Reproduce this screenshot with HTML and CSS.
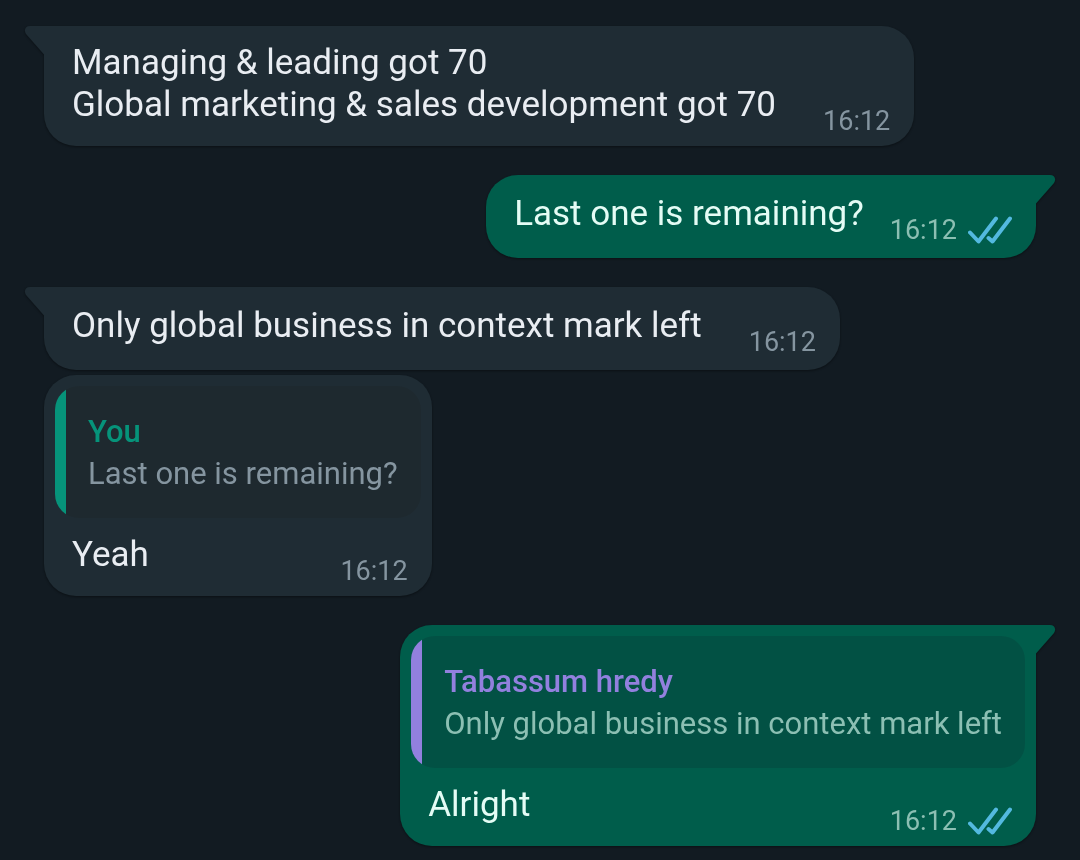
FILE: index.html
```html
<!DOCTYPE html>
<html lang="en">
<head>
<meta charset="utf-8">
<meta name="viewport" content="width=device-width, initial-scale=1">
<title>Chat</title>
<link rel="stylesheet" href="styles.css">
</head>
<body>
<svg class="symbols" aria-hidden="true">
  <symbol id="tail" viewBox="0 0 21 29"><path d="M21 0H6C1.500 0-.5 4 2 8L20 28.500h1z"/></symbol>
  <symbol id="ticks" viewBox="0 0 44 28"><path d="M2 16.500L10.500 25.500L28 2.500M20.500 22L24.500 25.500L42 2.500"/></symbol>
</svg>
<main class="chat">
  <article class="bubble incoming">
    <svg class="tail" aria-hidden="true"><use href="#tail"/></svg>
    <div class="message">
      <p class="text">Managing &amp; leading got 70<br>Global marketing &amp; sales development got 70</p>
      <time class="time">16:12</time>
    </div>
  </article>

  <article class="bubble outgoing">
    <svg class="tail" aria-hidden="true"><use href="#tail"/></svg>
    <div class="message single">
      <p class="text">Last one is remaining?</p>
      <div class="status">
        <time class="time">16:12</time>
        <svg class="ticks" role="img" aria-label="Read"><use href="#ticks"/></svg>
      </div>
    </div>
  </article>

  <article class="bubble incoming">
    <svg class="tail" aria-hidden="true"><use href="#tail"/></svg>
    <div class="message single">
      <p class="text">Only global business in context mark left</p>
      <time class="time">16:12</time>
    </div>
  </article>

  <article class="bubble incoming grouped">
    <blockquote class="quote">
      <p class="quote-name">You</p>
      <p class="quote-text">Last one is remaining?</p>
    </blockquote>
    <div class="message">
      <p class="text">Yeah</p>
      <time class="time">16:12</time>
    </div>
  </article>

  <article class="bubble outgoing">
    <svg class="tail" aria-hidden="true"><use href="#tail"/></svg>
    <blockquote class="quote contact">
      <p class="quote-name">Tabassum hredy</p>
      <p class="quote-text">Only global business in context mark left</p>
    </blockquote>
    <div class="message">
      <p class="text">Alright</p>
      <div class="status">
        <time class="time">16:12</time>
        <svg class="ticks" role="img" aria-label="Read"><use href="#ticks"/></svg>
      </div>
    </div>
  </article>
</main>
</body>
</html>
```
FILE: styles.css
```css
* {
  box-sizing: border-box;
}

body {
  margin: 0;
  background: #121b22;
  font-family: Roboto, "Noto Sans", sans-serif;
}

p,
blockquote {
  margin: 0;
}

.symbols {
  position: absolute;
  width: 0;
  height: 0;
}

.chat {
  display: flex;
  flex-direction: column;
  align-items: flex-start;
  gap: 29px;
  padding: 26px 44px 14px;
}

.bubble {
  position: relative;
  max-width: 100%;
  border-radius: 32px;
  background: var(--bubble);
  color: var(--ink);
  filter: drop-shadow(0 1px 1px rgba(0, 0, 0, 0.4));
}

.incoming {
  --bubble: #1f2c34;
  --ink: #e9edf2;
  --muted: #8595a0;
  --gap: 47px;
  --quote: #1e292f;
}

.outgoing {
  --bubble: #005d4b;
  --ink: #e4fcf5;
  --muted: #8cbfb3;
  --gap: 26px;
  --quote: #025144;
  align-self: flex-end;
}

.incoming:not(.grouped) {
  border-top-left-radius: 0;
}

.outgoing {
  border-top-right-radius: 0;
}

.grouped {
  margin-top: -24px;
}

.tail {
  position: absolute;
  top: 0;
  left: -20px;
  width: 21px;
  height: 29px;
  fill: var(--bubble);
}

.outgoing .tail {
  left: auto;
  right: -20px;
  transform: scaleX(-1);
}

.message {
  display: flex;
  align-items: flex-end;
  justify-content: space-between;
  gap: var(--gap);
  padding: 16px 24px 10px 28px;
}

.single {
  padding-top: 18px;
  padding-bottom: 13px;
}

.text {
  padding-bottom: 10px;
  font-size: 35px;
  line-height: 42px;
}

.status {
  display: flex;
  align-items: center;
  gap: 11px;
}

.time {
  color: var(--muted);
  font-size: 27px;
  line-height: 30px;
}

.ticks {
  width: 44px;
  height: 28px;
  fill: none;
  stroke: #53b9e0;
  stroke-width: 4;
  stroke-linecap: round;
  stroke-linejoin: round;
}

.quote {
  --accent: #06937a;
  margin: 0 11px;
  padding: 25px 23px 23px 33px;
  border-radius: 24px;
  background: linear-gradient(to right, var(--accent) 11px, var(--quote) 11px);
}

.bubble:has(.quote) {
  padding-top: 11px;
}

.contact {
  --accent: #9280de;
}

.quote-name {
  color: var(--accent);
  font-size: 31px;
  font-weight: 500;
  line-height: 42px;
}

.quote-text {
  color: var(--muted);
  font-size: 31px;
  line-height: 42px;
}
```
